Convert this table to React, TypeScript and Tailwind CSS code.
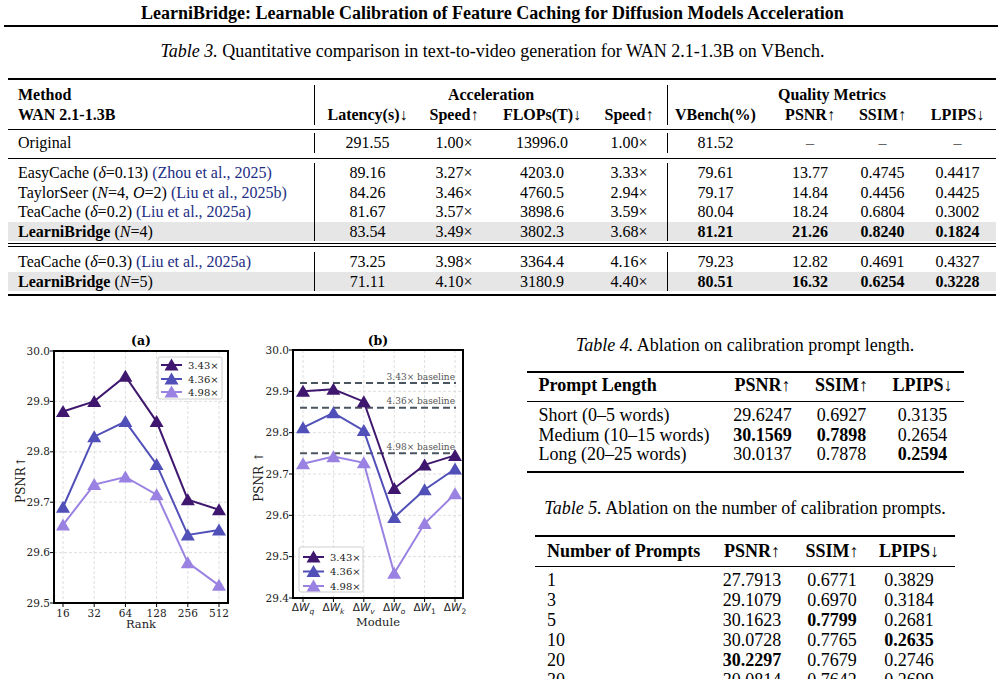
import type { ReactNode } from 'react';

const C1 = '#3f176e';
const C2 = '#5150b8';
const C3 = '#9a82e2';

type Series = { color: string; label: string; values: number[] };

type Legend = { x: number; y: number; w: number; h: number; rows: number[]; lineX: number; textX: number };

type ChartProps = {
  box: [number, number, number, number];
  yMin: number;
  yMax: number;
  yTicks: string[];
  tickRight: number;
  xs: number[];
  xLabels: ReactNode[];
  tickLabelY: number;
  title: string;
  titleX: number;
  xTitle: string;
  xTitleY: number;
  yTitle: string;
  yTitleX: number;
  yTitleY: number;
  series: Series[];
  legend: Legend;
  baselines?: { v: number; label: string }[];
};

function Tri({ x, y, color }: { x: number; y: number; color: string }) {
  return <polygon points={`${x},${y - 6.5} ${x - 7},${y + 5.5} ${x + 7},${y + 5.5}`} fill={color} />;
}

function Chart(p: ChartProps) {
  const [l, t, r, b] = p.box;
  const sy = (v: number) => t + ((p.yMax - v) / (p.yMax - p.yMin)) * (b - t);

  return (
    <svg width={245} height={310} className="block shrink-0" fontFamily="'DejaVu Serif', serif">
      {/* grid */}
      {p.xs.map((x) => (
        <line key={`gx${x}`} x1={x} x2={x} y1={t} y2={b} stroke="#d6d6d6" strokeWidth={0.8} strokeDasharray="3 2" />
      ))}
      {p.yTicks.map((s) => (
        <line key={`gy${s}`} x1={l} x2={r} y1={sy(Number(s))} y2={sy(Number(s))} stroke="#d6d6d6" strokeWidth={0.8} strokeDasharray="3 2" />
      ))}

      {/* baselines */}
      {p.baselines?.map((bl) => (
        <g key={bl.label}>
          <line x1={l + 7} x2={r - 7} y1={sy(bl.v)} y2={sy(bl.v)} stroke="#4b5560" strokeWidth={2} strokeDasharray="7 4" />
          <text x={r - 8} y={sy(bl.v) - 3.5} fontSize={9} fill="#555" textAnchor="end">
            {bl.label}
          </text>
        </g>
      ))}

      {/* series */}
      {p.series.map((s) => (
        <g key={s.label}>
          <polyline
            points={s.values.map((v, i) => `${p.xs[i]},${sy(v)}`).join(' ')}
            fill="none"
            stroke={s.color}
            strokeWidth={2}
          />
          {s.values.map((v, i) => (
            <Tri key={i} x={p.xs[i]} y={sy(v)} color={s.color} />
          ))}
        </g>
      ))}

      {/* frame */}
      <rect x={l} y={t} width={r - l} height={b - t} fill="none" stroke="#000" strokeWidth={2} />

      {/* ticks */}
      {p.yTicks.map((s) => (
        <g key={`ty${s}`}>
          <line x1={l - 4} x2={l} y1={sy(Number(s))} y2={sy(Number(s))} stroke="#000" strokeWidth={1} />
          <text x={p.tickRight} y={sy(Number(s)) + 3.5} fontSize={10.5} fill="#222" textAnchor="end">
            {s}
          </text>
        </g>
      ))}
      {p.xs.map((x, i) => (
        <g key={`tx${x}`}>
          <line x1={x} x2={x} y1={b} y2={b + 4} stroke="#000" strokeWidth={1} />
          <text x={x} y={p.tickLabelY} fontSize={10.5} fill="#222" textAnchor="middle">
            {p.xLabels[i]}
          </text>
        </g>
      ))}

      {/* titles */}
      <text x={p.titleX} y={15} fontSize={12.5} fontWeight="bold" textAnchor="middle" fill="#000">
        {p.title}
      </text>
      <text x={p.titleX} y={p.xTitleY} fontSize={11.5} textAnchor="middle" fill="#222">
        {p.xTitle}
      </text>
      <text
        x={0}
        y={0}
        fontSize={12}
        textAnchor="middle"
        fill="#222"
        transform={`translate(${p.yTitleX} ${p.yTitleY}) rotate(-90)`}
      >
        {p.yTitle}
      </text>

      {/* legend */}
      <rect
        x={p.legend.x}
        y={p.legend.y}
        width={p.legend.w}
        height={p.legend.h}
        rx={2}
        fill="#fff"
        fillOpacity={0.85}
        stroke="#cfcfcf"
        strokeWidth={1}
      />
      {p.series.map((s, i) => {
        const y = p.legend.rows[i];
        return (
          <g key={`lg${s.label}`}>
            <line x1={p.legend.lineX} x2={p.legend.lineX + 21} y1={y} y2={y} stroke={s.color} strokeWidth={2} />
            <Tri x={p.legend.lineX + 10.5} y={y} color={s.color} />
            <text x={p.legend.textX} y={y + 3.5} fontSize={10} fill="#222">
              {s.label}
            </text>
          </g>
        );
      })}
    </svg>
  );
}

function DW({ sub }: { sub: string }) {
  return (
    <>
      <tspan fontFamily="'DejaVu Sans', sans-serif">Δ</tspan>
      <tspan fontFamily="'DejaVu Sans', sans-serif" fontStyle="italic">
        W
      </tspan>
      <tspan fontFamily="'DejaVu Sans', sans-serif" fontStyle={sub === '1' || sub === '2' ? 'normal' : 'italic'} fontSize={7.5} dy={2.5}>
        {sub}
      </tspan>
    </>
  );
}

const COLS = 'grid grid-cols-[306px_96px_88px_88px_81px_96px_83px_73px_77px]';
const PAD = [
  'pl-[10px] text-left',
  'pl-[10px] border-l border-black text-center',
  'text-center',
  'text-center',
  'pl-[5px] text-center',
  'border-l border-black text-center',
  'pl-[11px] text-center',
  'text-center',
  'text-center',
];

function Cite({ children }: { children: ReactNode }) {
  return <span className="text-[#1d2d84]">{children}</span>;
}

function T3Row({ cells, hl, bold }: { cells: ReactNode[]; hl?: boolean; bold?: boolean }) {
  return (
    <div className={`${COLS} h-[19.5px] leading-[19.5px] ${hl ? 'bg-[#e6e6e6]' : ''}`}>
      {cells.map((c, i) => (
        <div key={i} className={`${PAD[i]} ${bold && i >= 5 ? 'font-bold' : ''}`}>
          {c}
        </div>
      ))}
    </div>
  );
}

const x = '×';

function Table3() {
  return (
    <div className="ml-[8px] w-[988px] mt-[17px] border-t-2 border-black">
      <div className="pt-[5px] pb-[4px] border-b border-black font-bold">
        <div className={`${COLS} h-[20px] leading-[20px]`}>
          <div className="pl-[10px]">Method</div>
          <div className="col-span-4 border-l border-black text-center">Acceleration</div>
          <div className="col-span-4 border-l border-black text-center">Quality Metrics</div>
        </div>
        <div className={`${COLS} h-[20px] leading-[20px]`}>
          <div className="pl-[10px]">WAN 2.1-1.3B</div>
          <div className="pl-[10px] border-l border-black text-center">Latency(s)↓</div>
          <div className="text-center">Speed↑</div>
          <div className="text-center">FLOPs(T)↓</div>
          <div className="pl-[5px] text-center">Speed↑</div>
          <div className="border-l border-black text-center">VBench(%)</div>
          <div className="pl-[11px] text-center">PSNR↑</div>
          <div className="text-center">SSIM↑</div>
          <div className="text-center">LPIPS↓</div>
        </div>
      </div>
      <div className="pt-[3px] pb-[5px] border-b border-black">
        <div className={`${COLS} h-[20px] leading-[20px]`}>
          {['Original', '291.55', `1.00${x}`, '13996.0', `1.00${x}`, '81.52', '–', '–', '–'].map((c, i) => (
            <div key={i} className={`${PAD[i]} ${i >= 6 ? 'text-[#666]' : ''}`}>
              {c}
            </div>
          ))}
        </div>
      </div>
      <div className="pt-[4px] pb-[2px] border-b border-black">
        <T3Row
          cells={[
            <>
              EasyCache (<i>δ</i>=0.13) <Cite>(Zhou et al., 2025)</Cite>
            </>,
            '89.16',
            `3.27${x}`,
            '4203.0',
            `3.33${x}`,
            '79.61',
            '13.77',
            '0.4745',
            '0.4417',
          ]}
        />
        <T3Row
          cells={[
            <>
              TaylorSeer (<i>N</i>=4, <i>O</i>=2) <Cite>(Liu et al., 2025b)</Cite>
            </>,
            '84.26',
            `3.46${x}`,
            '4760.5',
            `2.94${x}`,
            '79.17',
            '14.84',
            '0.4456',
            '0.4425',
          ]}
        />
        <T3Row
          cells={[
            <>
              TeaCache (<i>δ</i>=0.2) <Cite>(Liu et al., 2025a)</Cite>
            </>,
            '81.67',
            `3.57${x}`,
            '3898.6',
            `3.59${x}`,
            '80.04',
            '18.24',
            '0.6804',
            '0.3002',
          ]}
        />
        <T3Row
          hl
          bold
          cells={[
            <>
              <b>LearniBridge</b> (<i>N</i>=4)
            </>,
            '83.54',
            `3.49${x}`,
            '3802.3',
            `3.68${x}`,
            '81.21',
            '21.26',
            '0.8240',
            '0.1824',
          ]}
        />
      </div>
      <div className="mt-[2px] border-t border-black pt-[5px] pb-[3px] border-b-2">
        <T3Row
          cells={[
            <>
              TeaCache (<i>δ</i>=0.3) <Cite>(Liu et al., 2025a)</Cite>
            </>,
            '73.25',
            `3.98${x}`,
            '3364.4',
            `4.16${x}`,
            '79.23',
            '12.82',
            '0.4691',
            '0.4327',
          ]}
        />
        <T3Row
          hl
          bold
          cells={[
            <>
              <b>LearniBridge</b> (<i>N</i>=5)
            </>,
            '71.11',
            `4.10${x}`,
            '3180.9',
            `4.40${x}`,
            '80.51',
            '16.32',
            '0.6254',
            '0.3228',
          ]}
        />
      </div>
    </div>
  );
}

type AblRow = { label: string; vals: string[]; bold: number[] };

const t4Rows: AblRow[] = [
  { label: 'Short (0–5 words)', vals: ['29.6247', '0.6927', '0.3135'], bold: [] },
  { label: 'Medium (10–15 words)', vals: ['30.1569', '0.7898', '0.2654'], bold: [0, 1] },
  { label: 'Long (20–25 words)', vals: ['30.0137', '0.7878', '0.2594'], bold: [2] },
];

const t5Rows: AblRow[] = [
  { label: '1', vals: ['27.7913', '0.6771', '0.3829'], bold: [] },
  { label: '3', vals: ['29.1079', '0.6970', '0.3184'], bold: [] },
  { label: '5', vals: ['30.1623', '0.7799', '0.2681'], bold: [1] },
  { label: '10', vals: ['30.0728', '0.7765', '0.2635'], bold: [2] },
  { label: '20', vals: ['30.2297', '0.7679', '0.2746'], bold: [0] },
  { label: '30', vals: ['30.0814', '0.7642', '0.2699'], bold: [] },
];

export default function App() {
  const seriesA: Series[] = [
    { color: C1, label: `3.43${x}`, values: [29.88, 29.9, 29.95, 29.86, 29.705, 29.685] },
    { color: C2, label: `4.36${x}`, values: [29.69, 29.83, 29.86, 29.775, 29.635, 29.645] },
    { color: C3, label: `4.98${x}`, values: [29.655, 29.735, 29.75, 29.715, 29.58, 29.535] },
  ];
  const seriesB: Series[] = [
    { color: C1, label: `3.43${x}`, values: [29.9, 29.905, 29.875, 29.665, 29.722, 29.745] },
    { color: C2, label: `4.36${x}`, values: [29.812, 29.848, 29.805, 29.595, 29.662, 29.712] },
    { color: C3, label: `4.98${x}`, values: [29.725, 29.742, 29.727, 29.46, 29.58, 29.652] },
  ];

  return (
    <div className="w-[1002px] h-[679px] overflow-hidden bg-white text-black font-['Liberation_Serif',serif] text-[16px]">
      <div className="pt-[3px] pr-[17px] leading-[21px] text-center font-bold text-[18px]">
        LearniBridge: Learnable Calibration of Feature Caching for Diffusion Models Acceleration
      </div>
      <div className="mx-[4px] mt-[1px] h-[2px] bg-black" />
      <div className="mt-[14px] pr-[17px] leading-[20px] text-center text-[18px]">
        <i>Table 3.</i> Quantitative comparison in text-to-video generation for WAN 2.1-1.3B on VBench.
      </div>

      <Table3 />

      <div className="mt-[34px] flex">
        <Chart
          box={[54, 21, 228, 273]}
          yMin={29.5}
          yMax={30}
          yTicks={['30.0', '29.9', '29.8', '29.7', '29.6', '29.5']}
          tickRight={50}
          xs={[63, 94.2, 125.4, 156.6, 187.8, 219]}
          xLabels={['16', '32', '64', '128', '256', '512']}
          tickLabelY={287}
          title="(a)"
          titleX={141}
          xTitle="Rank"
          xTitleY={298}
          yTitle="PSNR↑"
          yTitleX={25}
          yTitleY={150}
          series={seriesA}
          legend={{ x: 158, y: 27, w: 64, h: 42, rows: [35, 49, 62], lineX: 161, textX: 188 }}
        />
        <Chart
          box={[48, 20, 218, 268]}
          yMin={29.4}
          yMax={30}
          yTicks={['30.0', '29.9', '29.8', '29.7', '29.6', '29.5', '29.4']}
          tickRight={44}
          xs={[58, 88.4, 118.8, 149.2, 179.6, 210]}
          xLabels={[<DW key="q" sub="q" />, <DW key="k" sub="k" />, <DW key="v" sub="v" />, <DW key="o" sub="o" />, <DW key="1" sub="1" />, <DW key="2" sub="2" />]}
          tickLabelY={281}
          title="(b)"
          titleX={133}
          xTitle="Module"
          xTitleY={296}
          yTitle="PSNR ↑"
          yTitleX={18}
          yTitleY={147}
          series={seriesB}
          baselines={[
            { v: 29.92, label: `3.43${x} baseline` },
            { v: 29.86, label: `4.36${x} baseline` },
            { v: 29.75, label: `4.98${x} baseline` },
          ]}
          legend={{ x: 54, y: 217, w: 64, h: 45, rows: [227, 241.5, 256], lineX: 58, textX: 85 }}
        />

        <div className="w-[510px] flex flex-col items-center pt-[5px] text-[18px]">
          <div className="leading-[20px]">
            <i>Table 4.</i> Ablation on calibration prompt length.
          </div>
          <div className="mt-[16px] w-[437px]">
            <div className="border-t-2 border-black pt-[2px] pb-[6px] border-b">
              <div className="grid grid-cols-[192px_88px_70px_87px] h-[20px] leading-[20px] font-bold">
                <div className="pl-[12px]">Prompt Length</div>
                <div className="text-center">PSNR↑</div>
                <div className="text-center">SSIM↑</div>
                <div className="pl-[5px] text-center">LPIPS↓</div>
              </div>
            </div>
            <div className="pt-[4px] pb-[6.5px] border-b-2 border-black">
              {t4Rows.map((row) => (
                <div key={row.label} className="grid grid-cols-[192px_88px_70px_87px] h-[19.5px] leading-[19.5px]">
                  <div className="pl-[12px] whitespace-nowrap">{row.label}</div>
                  {row.vals.map((v, i) => (
                    <div
                      key={i}
                      className={`text-center ${i === 2 ? 'pl-[5px]' : ''} ${row.bold.includes(i) ? 'font-bold' : ''}`}
                    >
                      {v}
                    </div>
                  ))}
                </div>
              ))}
            </div>
          </div>

          <div className="mt-[25px] leading-[20px]">
            <i>Table 5.</i> Ablation on the number of calibration prompts.
          </div>
          <div className="mt-[17px] w-[420px]">
            <div className="border-t-2 border-black pt-[4px] pb-[5px] border-b">
              <div className="grid grid-cols-[173px_88px_72px_87px] h-[20px] leading-[20px] font-bold">
                <div className="pl-[12px] whitespace-nowrap">Number of Prompts</div>
                <div className="text-center">PSNR↑</div>
                <div className="text-center">SSIM↑</div>
                <div className="pr-[5px] text-center">LPIPS↓</div>
              </div>
            </div>
            <div className="pt-[3px]">
              {t5Rows.map((row) => (
                <div key={row.label} className="grid grid-cols-[173px_88px_72px_87px] h-[20px] leading-[20px]">
                  <div className="pl-[12px]">{row.label}</div>
                  {row.vals.map((v, i) => (
                    <div
                      key={i}
                      className={`text-center ${i === 2 ? 'pr-[5px]' : ''} ${row.bold.includes(i) ? 'font-bold' : ''}`}
                    >
                      {v}
                    </div>
                  ))}
                </div>
              ))}
            </div>
          </div>
        </div>
      </div>
    </div>
  );
}
